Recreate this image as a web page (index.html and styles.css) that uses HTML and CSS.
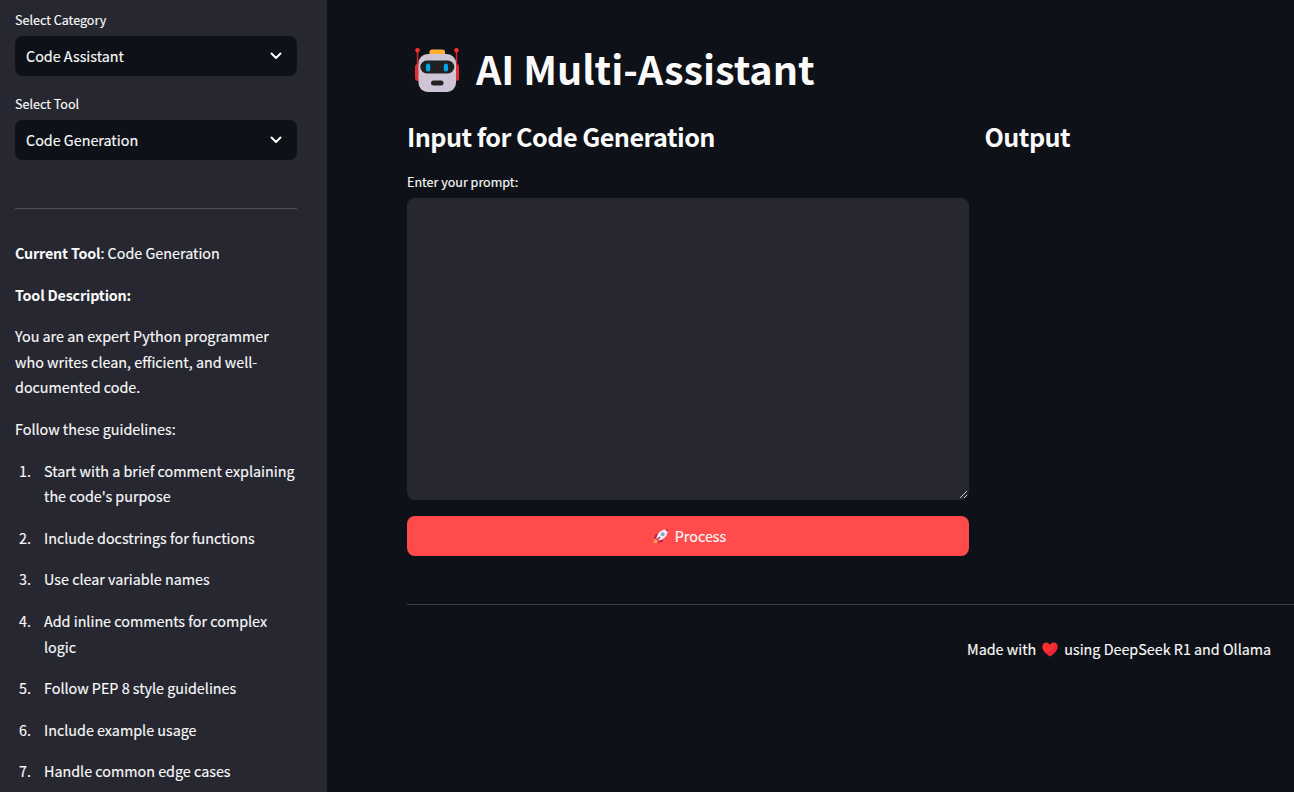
FILE: index.html
```html
<!DOCTYPE html>
<html lang="en">
<head>
<meta charset="utf-8">
<title>AI Multi-Assistant</title>
<link rel="stylesheet" href="styles.css">
</head>
<body>
<div class="app">
  <aside class="sidebar">
    <div class="field">
      <span class="label">Select Category</span>
      <div class="select"><span>Code Assistant</span>
        <svg class="chevron" viewBox="0 0 12 8"><path d="M1.500 1.500 6 6l4.500-4.500"/></svg></div>
    </div>
    <div class="field">
      <span class="label">Select Tool</span>
      <div class="select"><span>Code Generation</span>
        <svg class="chevron" viewBox="0 0 12 8"><path d="M1.500 1.500 6 6l4.500-4.500"/></svg></div>
    </div>
    <hr class="rule side-rule">
    <div class="prose">
      <p><strong>Current Tool</strong>: Code Generation</p>
      <p><strong>Tool Description:</strong></p>
      <p>You are an expert Python programmer<br>who writes clean, efficient, and well-<br>documented code.</p>
      <p>Follow these guidelines:</p>
      <ol class="guide">
        <li><span class="num">1.</span><span>Start with a brief comment explaining<br>the code's purpose</span></li>
        <li><span class="num">2.</span><span>Include docstrings for functions</span></li>
        <li><span class="num">3.</span><span>Use clear variable names</span></li>
        <li><span class="num">4.</span><span>Add inline comments for complex<br>logic</span></li>
        <li><span class="num">5.</span><span>Follow PEP 8 style guidelines</span></li>
        <li><span class="num">6.</span><span>Include example usage</span></li>
        <li><span class="num">7.</span><span>Handle common edge cases</span></li>
      </ol>
    </div>
  </aside>
  <main class="main">
    <h1 class="title">
      <svg class="robot" viewBox="0 0 44 44">
        <path d="M2.500 3v18M41.500 3v18" stroke="#d3252d" stroke-width="1.500"/>
        <circle cx="2.500" cy="2.300" r="2.200" fill="#f8312f"/><circle cx="41.500" cy="2.300" r="2.200" fill="#f8312f"/>
        <rect x="0" y="16" width="8" height="17" rx="3" fill="#e32b32"/><rect x="36" y="16" width="8" height="17" rx="3" fill="#e32b32"/>
        <rect x="14.500" y="1.500" width="15.500" height="9" rx="2.500" fill="#ffb02e"/>
        <rect x="3.500" y="6" width="37.500" height="38" rx="9" fill="#cdc4d6"/>
        <rect x="5.300" y="12.500" width="34" height="13" rx="6.500" fill="#212121"/>
        <rect x="11" y="15.500" width="4.200" height="8" rx="2" fill="#00a6ed"/><rect x="28.800" y="15.500" width="4.200" height="8" rx="2" fill="#00a6ed"/>
        <rect x="16" y="32.500" width="12.500" height="5" rx="2.500" fill="#212121"/>
      </svg>
      <span>AI Multi-Assistant</span>
    </h1>
    <div class="columns">
      <section>
        <h2 class="heading">Input for Code Generation</h2>
        <label class="label" for="prompt">Enter your prompt:</label>
        <div class="prompt-wrap">
          <textarea class="prompt" id="prompt"></textarea>
          <svg class="grip" viewBox="0 0 9 9"><path d="M1 8 8 1M5 8l3-3"/></svg>
        </div>
        <button class="process">
          <svg class="rocket" viewBox="0 0 32 32">
            <path d="M1 30c0-4 1-7 5-8l4 4c-1 4-5 5-9 4z" fill="#ff9a4d"/>
            <path d="M13 10 5 13l-3 8 8-2zM22 19l-3 8-9 3 3-8z" fill="#b01550"/>
            <path d="M7 20C8 10 17 2 30 2c0 13-8 22-18 23z" fill="#eeeaf3"/>
            <path d="M24 2.500c2-.5 4-.5 6-.5 0 2 0 4-.5 6z" fill="#d8194f"/>
            <circle cx="19.500" cy="12.500" r="3.500" fill="#6d8fab"/><circle cx="19.500" cy="12.500" r="1.800" fill="#7cc5df"/>
            <path d="m8 24 6-6" stroke="#b4134f" stroke-width="2.500"/>
          </svg>
          <span>Process</span>
        </button>
      </section>
      <section><h2 class="heading">Output</h2></section>
    </div>
    <hr class="rule">
    <p class="footer"><span>Made with</span>
      <svg class="heart" viewBox="0 0 16 15"><path d="M8 14.500C4 12 .3 8.500.3 4.700.3 2 2.200.5 4.200.5 6 .5 7.300 1.500 8 3 8.700 1.500 10 .5 11.800.5c2 0 3.900 1.500 3.900 4.200C15.700 8.500 12 12 8 14.500z" fill="#f8312f"/><path d="M13 1c3.500 2 3 6 .5 8.500C12 11.500 10 13.300 8 14.500 5.500 13 3 11 1.500 8.500c4 3 11 2 11.500-7.500z" fill="#ca0b4a" opacity=".35"/></svg>
      <span>using DeepSeek R1 and Ollama</span></p>
  </main>
</div>
</body>
</html>
```
FILE: styles.css
```css
* { box-sizing: border-box; }
body {
  margin: 0;
  background: #0e1117;
  color: #fafafa;
  font-family: "Noto Sans CJK SC", "Noto Sans", sans-serif;
  font-size: 14.33px;
  line-height: 25.6px;
  -webkit-text-stroke: 0.15px;
}
.app { display: flex; width: 1294px; height: 792px; overflow: hidden; }
.sidebar { flex: none; width: 327px; height: 792px; padding: 8px 30px 0 15px; background: #262730; overflow: hidden; }
.field { height: 84px; }
.label { display: block; height: 28px; font-size: 12.55px; line-height: 24px; }
.select {
  display: flex; align-items: center; justify-content: space-between;
  height: 40px; padding: 0 15px 0 11px; border-radius: 8px; background: #0e1117;
}
.chevron { width: 12px; height: 8px; fill: none; stroke: #fafafa; stroke-width: 2; stroke-linecap: round; stroke-linejoin: round; }
.rule { margin: 0; border: 0; border-top: 1px solid #3d3f46; }
.side-rule { margin: 32px 0 31px; border-color: #4f5057; }
.prose { white-space: nowrap; }
.prose p { margin: 0 0 16px; }
.prose strong { letter-spacing: -0.19px; -webkit-text-stroke: 0; }
.guide { margin: 0; padding: 0; list-style: none; }
.guide li { display: flex; margin-bottom: 16px; }
.num { flex: none; width: 29px; padding-left: 4px; }
.main { flex: none; width: 967px; padding: 40px 0 0 80px; white-space: nowrap; }
.title { display: flex; align-items: center; gap: 17px; height: 58px; margin: 0; padding-left: 8px; font-size: 39.6px; line-height: 58px; font-weight: 700; letter-spacing: -0.04px; -webkit-text-stroke: 0; }
.title span { padding-bottom: 3px; line-height: 55px; }
.robot { flex: none; width: 44px; height: 44px; margin-top: 2px; }
.columns { display: grid; grid-template-columns: 562px 309px; gap: 15.5px; padding-top: 18px; }
.heading { height: 40px; margin: 0 0 14px; font-size: 25.2px; line-height: 40px; font-weight: 600; letter-spacing: -0.55px; -webkit-text-stroke: 0; }
.prompt-wrap { position: relative; height: 302px; }
.prompt { display: block; width: 100%; height: 302px; border: 0; border-radius: 8px; background: #262730; color: #fafafa; resize: none; }
.grip { position: absolute; right: 1px; bottom: 1px; width: 9px; height: 9px; fill: none; stroke: #c8c8cc; stroke-width: 1; }
.process {
  display: flex; align-items: center; justify-content: center; gap: 6px;
  width: 100%; height: 40px; margin: 16px 0 48px; padding: 0 0 0 3px; border: 0; border-radius: 8px;
  background: #ff4b4b; color: #fafafa; font: inherit;
}
.rocket { width: 16px; height: 16px; }
.columns + .rule { margin-bottom: 31px; }
.footer { display: flex; align-items: center; gap: 6px; margin: 0 0 0 560px; }
.heart { width: 16px; height: 15px; margin-top: 1px; }
```
